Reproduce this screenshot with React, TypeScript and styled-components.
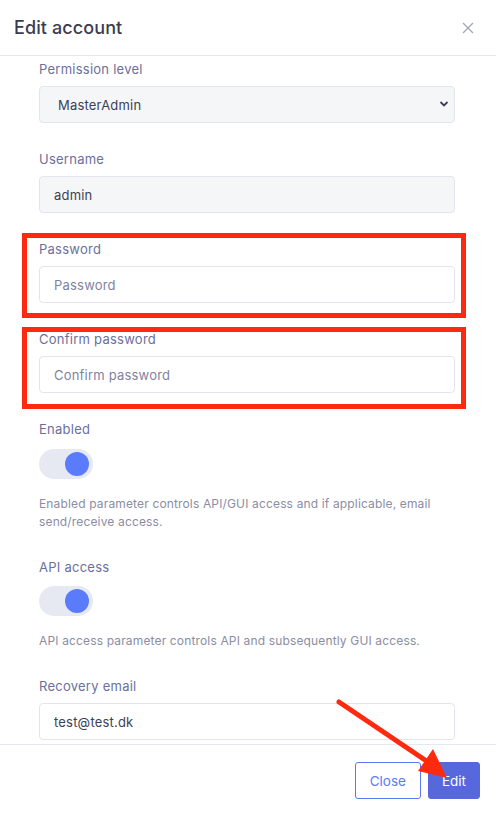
import React from "react";
import styled, { createGlobalStyle } from "styled-components";

const Global = createGlobalStyle`
  html, body { margin: 0; padding: 0; background: #ffffff; }
  body { font-family: "Inter", "Noto Sans", sans-serif; }
  * { box-sizing: border-box; }
`;

const Modal = styled.div`
  position: relative;
  width: 496px;
  height: 815px;
  display: flex;
  flex-direction: column;
  background: #fff;
  overflow: hidden;
`;

const Header = styled.header`
  height: 56px;
  flex: none;
  display: flex;
  align-items: center;
  justify-content: space-between;
  padding: 0 22px 0 14px;
  border-bottom: 1px solid #e6e8ef;
`;

const Title = styled.h2`
  margin: 0;
  font-size: 18px;
  font-weight: 500;
  color: #3b3c50;
  letter-spacing: 0.1px;
`;

const CloseIcon = styled.button`
  border: 0;
  background: none;
  padding: 0;
  width: 12px;
  height: 12px;
  display: flex;
  cursor: pointer;
`;

const Body = styled.div`
  flex: 1;
  overflow: hidden;
  padding: 2px 41px 0 39px;
  display: flex;
  flex-direction: column;
  gap: 25px;
`;

const Field = styled.div<{ $hl?: [number, number] }>`
  position: relative;
  display: flex;
  flex-direction: column;
  ${(p) =>
    p.$hl
      ? `&::after {
    content: "";
    position: absolute;
    left: -17px;
    right: -11px;
    top: ${p.$hl[0]}px;
    bottom: ${p.$hl[1]}px;
    border: 5px solid #fe2a0f;
    pointer-events: none;
  }`
      : ""}
`;

const Label = styled.label<{ $gap?: number }>`
  font-size: 13px;
  line-height: 20px;
  padding-top: 1px;
  letter-spacing: 0.25px;
  color: #6b6f9c;
  margin-bottom: ${(p) => p.$gap ?? 7}px;
`;

const inputBase = `
  width: 100%;
  height: 37px;
  border: 1px solid #e3e5ee;
  border-radius: 4px;
  font-family: "Inter", "Noto Sans", sans-serif;
  font-size: 13px;
  letter-spacing: 0.2px;
  color: #3d3f55;
  outline: none;
`;

const TextInput = styled.input<{ $muted?: boolean }>`
  ${inputBase}
  padding: 0 14px;
  background: ${(p) => (p.$muted ? "#f5f6f8" : "#ffffff")};
  &::placeholder { color: #7f839e; }
`;

const SelectWrap = styled.div`
  position: relative;
`;

const Select = styled.select`
  ${inputBase}
  appearance: none;
  -webkit-appearance: none;
  padding: 0 30px 0 18px;
  background: #f5f6f8;
`;

const Chevron = styled.svg`
  position: absolute;
  right: 6px;
  top: 14px;
  pointer-events: none;
`;

const Toggle = styled.div<{ $on?: boolean }>`
  width: 54px;
  height: 30px;
  border-radius: 15px;
  background: #e6e9f1;
  display: flex;
  align-items: center;
  justify-content: ${(p) => (p.$on ? "flex-end" : "flex-start")};
  padding: 0 4px;
`;

const Knob = styled.span`
  width: 24px;
  height: 24px;
  border-radius: 50%;
  background: #5a7bfb;
`;

const Help = styled.p`
  margin: 16px 0 0;
  font-size: 12px;
  line-height: 18px;
  letter-spacing: 0.15px;
  color: #8b8da3;
`;

const Footer = styled.footer`
  flex: none;
  height: 71px;
  border-top: 1px solid #e6e8ef;
  display: flex;
  justify-content: flex-end;
  align-items: flex-start;
  gap: 7px;
  padding: 17px 16px 0 0;
`;

const Button = styled.button<{ $primary?: boolean }>`
  height: 37px;
  padding: 0 ${(p) => (p.$primary ? 13 : 14)}px;
  border-radius: 3px;
  font-family: "Inter", "Noto Sans", sans-serif;
  font-size: 13.5px;
  border: 1px solid ${(p) => (p.$primary ? "#5668db" : "#5a78f5")};
  background: ${(p) => (p.$primary ? "#5668db" : "#ffffff")};
  color: ${(p) => (p.$primary ? "#ffffff" : "#5a7bfb")};
  cursor: pointer;
`;

const Arrow = styled.svg`
  position: absolute;
  left: 0;
  top: 0;
  pointer-events: none;
`;

export default function App() {
  return (
    <Modal>
      <Global />
      <Header>
        <Title>Edit account</Title>
        <CloseIcon aria-label="Close">
          <svg width="12" height="12" viewBox="0 0 12 12">
            <path d="M1 1 L11 11 M11 1 L1 11" stroke="#a3a6b4" strokeWidth="1.3" fill="none" />
          </svg>
        </CloseIcon>
      </Header>
      <Body>
        <Field>
          <Label>Permission level</Label>
          <SelectWrap>
            <Select defaultValue="MasterAdmin">
              <option>MasterAdmin</option>
              <option>Admin</option>
              <option>User</option>
            </Select>
            <Chevron width="10" height="8" viewBox="0 0 10 8">
              <path d="M1.5 2 L5 5.5 L8.5 2" stroke="#3d3f55" strokeWidth="1.8" fill="none" />
            </Chevron>
          </SelectWrap>
        </Field>
        <Field>
          <Label>Username</Label>
          <TextInput $muted defaultValue="admin" />
        </Field>
        <Field $hl={[-5, -15]}>
          <Label>Password</Label>
          <TextInput type="password" placeholder="Password" />
        </Field>
        <Field $hl={[-1, -16]}>
          <Label>Confirm password</Label>
          <TextInput type="password" placeholder="Confirm password" />
        </Field>
        <Field>
          <Label $gap={10}>Enabled</Label>
          <Toggle $on>
            <Knob />
          </Toggle>
          <Help>
            Enabled parameter controls API/GUI access and if applicable, email
            send/receive access.
          </Help>
        </Field>
        <Field>
          <Label $gap={9}>API access</Label>
          <Toggle $on>
            <Knob />
          </Toggle>
          <Help>API access parameter controls API and subsequently GUI access.</Help>
        </Field>
        <Field>
          <Label>Recovery email</Label>
          <TextInput defaultValue="test@test.dk" />
        </Field>
      </Body>
      <Footer>
        <Button>Close</Button>
        <Button $primary>Edit</Button>
      </Footer>
      <Arrow width="496" height="815" viewBox="0 0 496 815">
        <line x1="339" y1="702" x2="428" y2="762" stroke="#fe2a0f" strokeWidth="5" strokeLinecap="round" />
        <polygon points="418,771 433,749 447,778" fill="#fe2a0f" />
      </Arrow>
    </Modal>
  );
}
